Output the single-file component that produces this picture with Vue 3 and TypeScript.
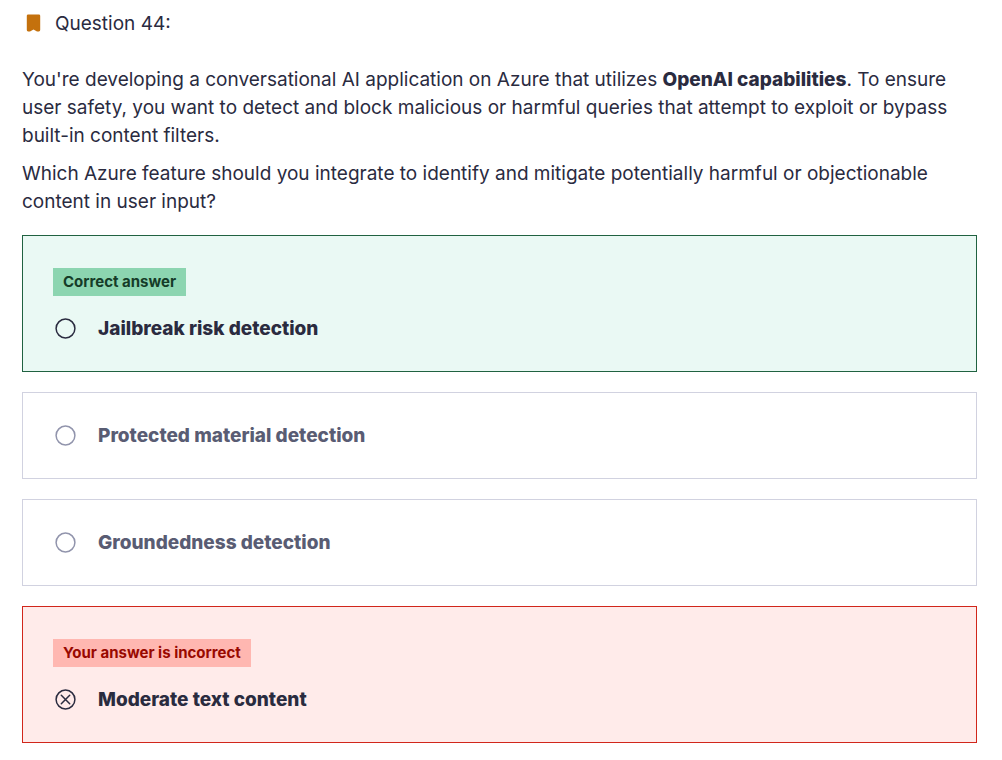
<script setup lang="ts">
import { ref } from 'vue'

type Status = 'correct' | 'incorrect' | 'plain'

interface Answer {
  id: string
  text: string
  status: Status
  badge?: string
}

const answers: Answer[] = [
  { id: 'jailbreak', text: 'Jailbreak risk detection', status: 'correct', badge: 'Correct answer' },
  { id: 'protected', text: 'Protected material detection', status: 'plain' },
  { id: 'groundedness', text: 'Groundedness detection', status: 'plain' },
  { id: 'moderate', text: 'Moderate text content', status: 'incorrect', badge: 'Your answer is incorrect' },
]

const selected = ref<string>('moderate')
</script>

<template>
  <main class="question">
    <header class="heading">
      <svg class="bookmark" viewBox="0 0 15 20" aria-hidden="true">
        <path d="M2.100.5h10.800q1.300 0 1.300 1.300v14.200q0 1.400-1.300 1.400h-1.900L7.500 15.500 4 17.400H2.100q-1.300 0-1.300-1.400V1.800Q.8.5 2.100.5z" />
      </svg>
      <h1>Question 44:</h1>
    </header>

    <div class="prompt">
      <p>
        You're developing a conversational AI application on Azure that utilizes
        <strong>OpenAI capabilities</strong>. To ensure user safety, you want to detect and block
        malicious or harmful queries that attempt to exploit or bypass built-in content filters.
      </p>
      <p>
        Which Azure feature should you integrate to identify and mitigate potentially harmful or
        objectionable content in user input?
      </p>
    </div>

    <div class="answers" role="radiogroup" aria-label="Answers">
      <div v-for="answer in answers" :key="answer.id" class="card" :class="answer.status">
        <span v-if="answer.badge" class="badge">{{ answer.badge }}</span>
        <label class="option" :for="answer.id">
          <span class="control">
            <input :id="answer.id" v-model="selected" type="radio" name="answer" :value="answer.id" />
            <svg class="mark" viewBox="0 0 21 21" aria-hidden="true">
              <circle cx="10.5" cy="10.5" r="9.4" />
              <path v-if="selected === answer.id" d="M6.3 6.3l8.4 8.4M14.7 6.3l-8.4 8.4" />
            </svg>
          </span>
          <span class="text">{{ answer.text }}</span>
        </label>
      </div>
    </div>
  </main>
</template>

<style>
body {
  margin: 0;
  background: #fff;
}
</style>

<style scoped>
.question {
  padding: 10px 25px 17px 22px;
  color: #2a2b3f;
  font-family: Inter, "Liberation Sans", sans-serif;
  font-size: 19px;
  line-height: 28px;
}

.heading {
  display: flex;
  align-items: center;
  gap: 14px;
  padding-left: 4px;
}

.heading h1 {
  margin: 0;
  font-size: 19px;
  font-weight: 400;
}

.bookmark {
  width: 15px;
  height: 20px;
  fill: #c4710d;
}

.prompt {
  display: grid;
  gap: 10px;
  margin-top: 28px;
}

.prompt p {
  margin: 0;
}

.prompt strong {
  font-weight: 800;
}

.answers {
  display: grid;
  gap: 20px;
  margin-top: 19px;
}

.card {
  display: flex;
  flex-direction: column;
  align-items: flex-start;
  gap: 18px;
  padding: 28px 30px;
  border: 1px solid #d1d2e0;
  color: #595c73;
}

.correct,
.incorrect {
  padding-top: 32px;
  color: #2a2b3f;
}

.correct {
  border-color: #206241;
  background: #eaf9f4;
}

.incorrect {
  border-color: #d1261b;
  background: #ffebea;
}

.badge {
  padding: 0 10px;
  font-size: 15px;
  font-weight: 700;
}

.correct .badge {
  background: #8cd5b0;
  color: #153c28;
}

.incorrect .badge {
  background: #ffb7b1;
  color: #990800;
}

.option {
  display: flex;
  align-items: center;
  gap: 22px;
  padding-left: 2px;
  font-weight: 800;
  line-height: 29px;
}

.control {
  display: grid;
  flex: none;
}

.control > * {
  grid-area: 1 / 1;
}

.control input {
  appearance: none;
  width: 21px;
  height: 21px;
  margin: 0;
  border-radius: 50%;
}

.mark {
  width: 21px;
  height: 21px;
  fill: none;
  stroke: #9194ac;
  stroke-width: 1.5;
  stroke-linecap: round;
  pointer-events: none;
}

.correct .mark,
.incorrect .mark {
  stroke: #2a2b3f;
}
</style>
